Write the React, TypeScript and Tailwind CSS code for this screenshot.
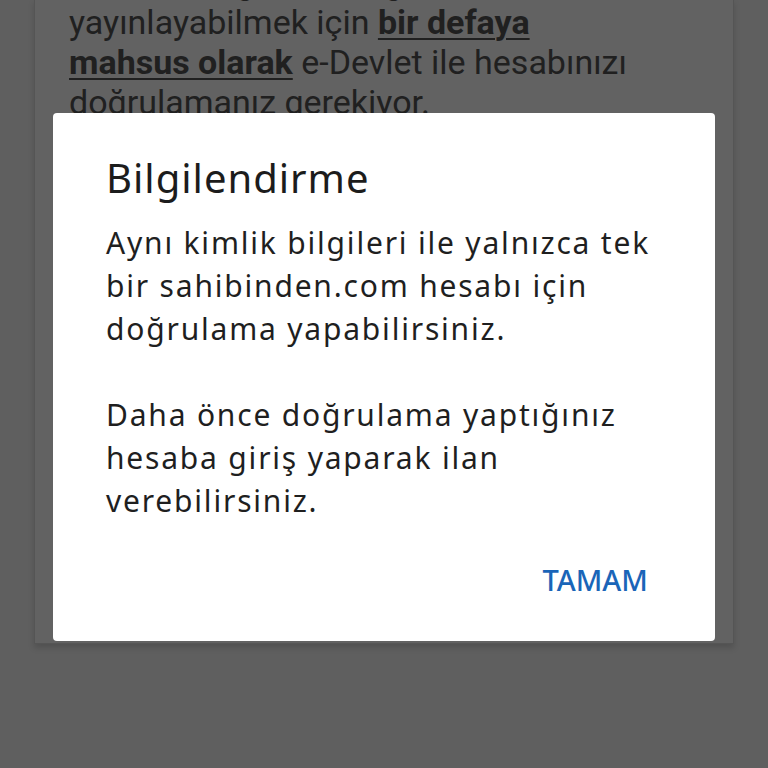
import React from "react";

export default function App() {
  return (
    <div className="relative w-[768px] h-[768px] overflow-hidden bg-[#5f5f5f]" style={{ fontFamily: "Roboto, 'Noto Sans', sans-serif" }}>
      {/* underlying page card (dimmed) */}
      <div className="ml-[34px] w-[700px] h-[645px] mt-[-1px] border border-[#555555] bg-[#626262] overflow-hidden shadow-[0_4px_6px_rgba(0,0,0,0.15)]">
        <div className="mt-[-38px] pl-[34px] pr-[30px] text-[34px] leading-[40px] text-[#202020] whitespace-nowrap">
          <p>Emlak kategorisinde güvenle ilanınızı</p>
          <p>
            yayınlayabilmek için{" "}
            <span className="font-bold underline underline-offset-[4px] decoration-2">bir defaya</span>
          </p>
          <p>
            <span className="font-bold underline underline-offset-[4px] decoration-2">mahsus olarak</span>{" "}
            e-Devlet ile hesabınızı
          </p>
          <p>doğrulamanız gerekiyor.</p>
        </div>
      </div>

      {/* backdrop + dialog */}
      <div className="absolute inset-0">
        <div
          className="absolute left-[53px] top-[113px] w-[662px] h-[528px] bg-white rounded-[4px] flex flex-col"
          style={{ fontFamily: "'Noto Sans', Roboto, sans-serif" }}
        >
          <h2 className="pl-[53px] pt-[41px] text-[40px] leading-[48px] tracking-[1px] text-[#1c1c1c] font-normal">Bilgilendirme</h2>
          <div className="pl-[53px] pr-[40px] mt-[19px] text-[30px] leading-[43px] tracking-[1.8px] text-[#1f1f1f]">
            <p>Aynı kimlik bilgileri ile yalnızca tek bir sahibinden.com hesabı için doğrulama yapabilirsiniz.</p>
            <p className="mt-[43px]">Daha önce doğrulama yaptığınız hesaba giriş yaparak ilan verebilirsiniz.</p>
          </div>
          <div className="mt-auto mb-[41px] flex justify-end pr-[67px]">
            <button className="text-[29px] leading-[40px] font-medium text-[#1a65b8]">TAMAM</button>
          </div>
        </div>
      </div>
    </div>
  );
}
